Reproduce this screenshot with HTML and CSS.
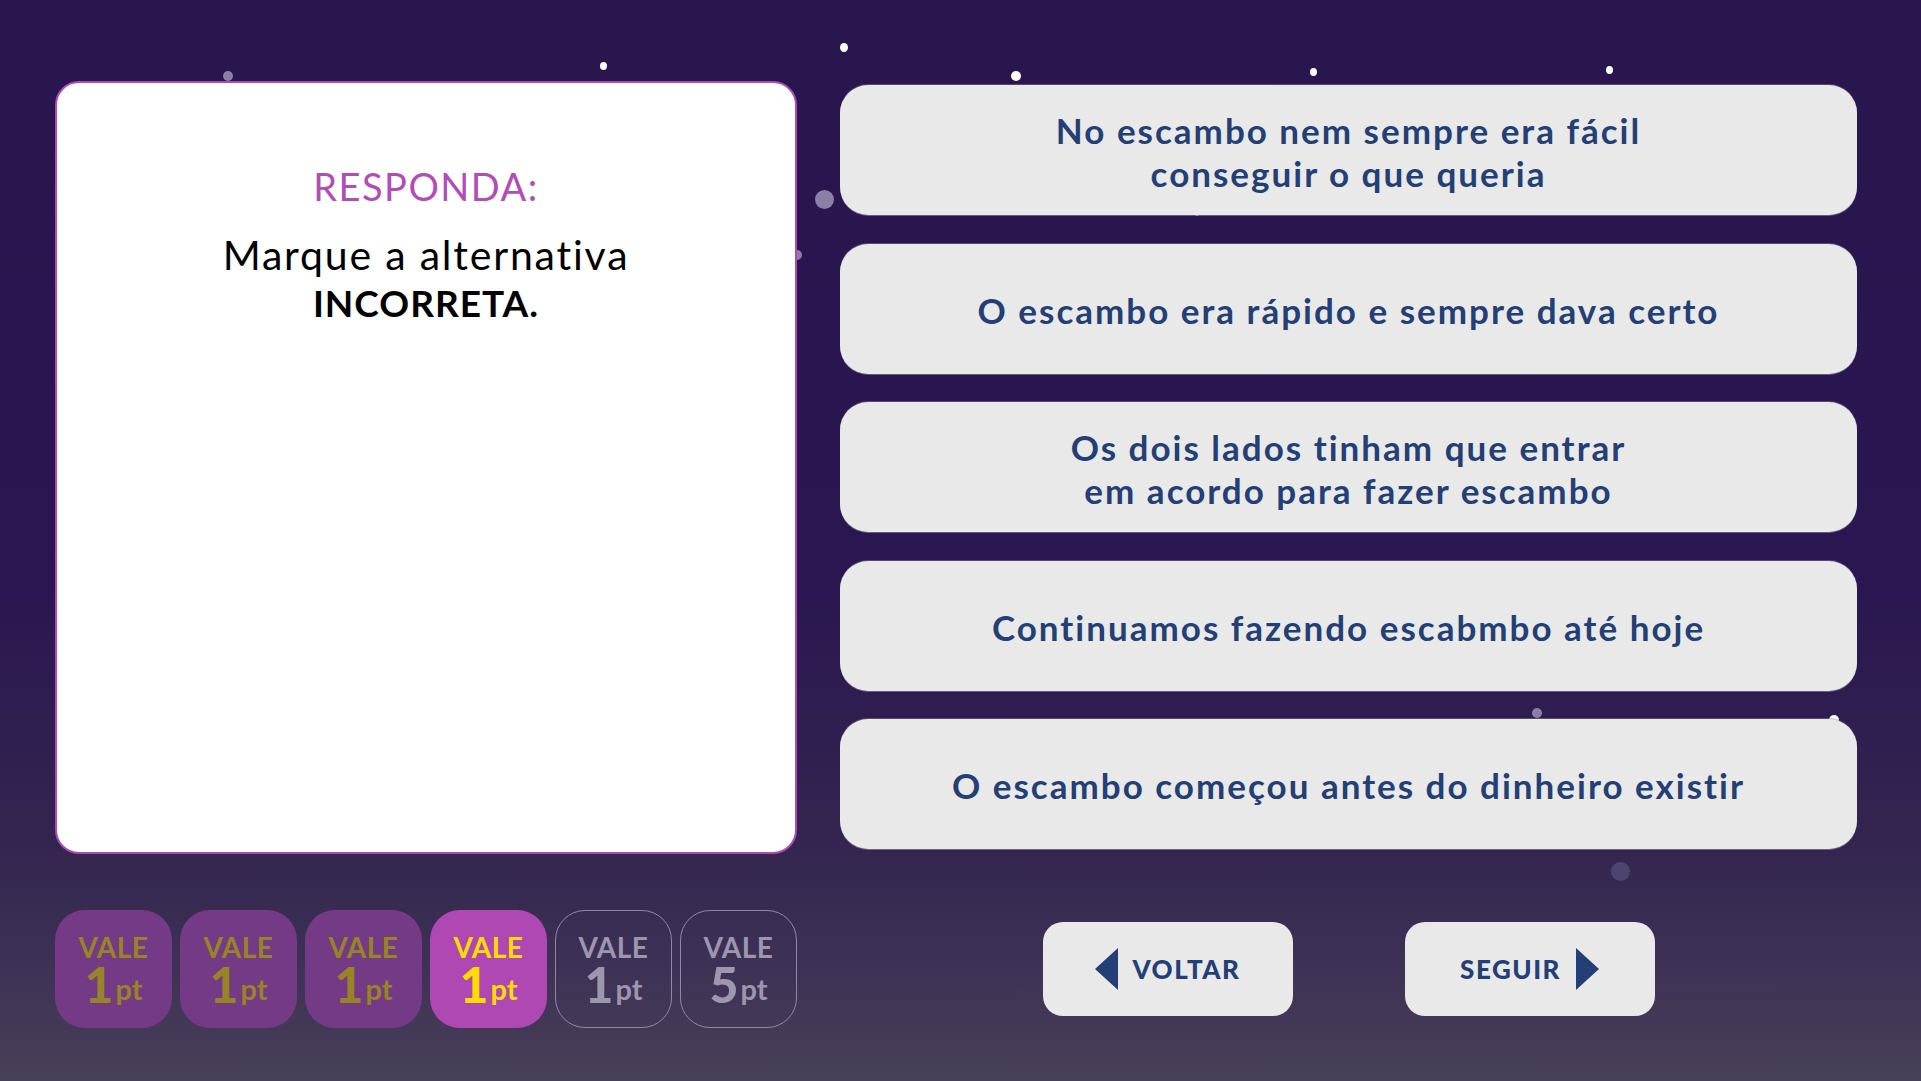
FILE: index.html
```html
<!DOCTYPE html>
<html lang="pt">
<head>
<meta charset="utf-8">
<title>Responda</title>
<link rel="stylesheet" href="styles.css">
</head>
<body>
<div class="screen">
  <div class="sky" aria-hidden="true">
    <span class="star grey" style="left:223px;top:71px;width:10px;height:10px"></span>
    <span class="star" style="left:600px;top:62px;width:7px;height:8px"></span>
    <span class="star" style="left:840px;top:43px;width:8px;height:9px"></span>
    <span class="star" style="left:1011px;top:71px;width:10px;height:10px"></span>
    <span class="star" style="left:1310px;top:68px;width:7px;height:8px"></span>
    <span class="star" style="left:1606px;top:66px;width:7px;height:8px"></span>
    <span class="star grey" style="left:815px;top:190px;width:19px;height:19px"></span>
    <span class="star grey" style="left:792px;top:250px;width:10px;height:10px"></span>
    <span class="star" style="left:1195px;top:212px;width:4px;height:4px"></span>
    <span class="star grey" style="left:1532px;top:708px;width:10px;height:10px"></span>
    <span class="star" style="left:1829px;top:715px;width:10px;height:10px"></span>
    <span class="star faint" style="left:1611px;top:862px;width:19px;height:19px"></span>
  </div>

  <div class="top">
    <section class="question">
      <h1 class="question-title">RESPONDA:</h1>
      <p class="question-text">Marque a alternativa<br><strong>INCORRETA.</strong></p>
    </section>

    <div class="answers">
      <button class="answer">No escambo nem sempre era fácil<br>conseguir o que queria</button>
      <button class="answer">O escambo era rápido e sempre dava certo</button>
      <button class="answer">Os dois lados tinham que entrar<br>em acordo para fazer escambo</button>
      <button class="answer">Continuamos fazendo escabmbo até hoje</button>
      <button class="answer">O escambo começou antes do dinheiro existir</button>
    </div>
  </div>

  <div class="bottom">
    <div class="scores">
      <div class="badge used"><span class="vale">VALE</span><span class="pts"><b>1</b>pt</span></div>
      <div class="badge used"><span class="vale">VALE</span><span class="pts"><b>1</b>pt</span></div>
      <div class="badge used"><span class="vale">VALE</span><span class="pts"><b>1</b>pt</span></div>
      <div class="badge current"><span class="vale">VALE</span><span class="pts"><b>1</b>pt</span></div>
      <div class="badge next"><span class="vale">VALE</span><span class="pts"><b>1</b>pt</span></div>
      <div class="badge next"><span class="vale">VALE</span><span class="pts"><b>5</b>pt</span></div>
    </div>

    <nav class="nav">
      <button class="nav-btn">
        <svg class="arrow" width="23" height="42" viewBox="0 0 23 42"><polygon points="23,0 23,42 0,21" fill="#243f75"/></svg>
        <span>VOLTAR</span>
      </button>
      <button class="nav-btn">
        <span>SEGUIR</span>
        <svg class="arrow" width="23" height="42" viewBox="0 0 23 42"><polygon points="0,0 23,21 0,42" fill="#243f75"/></svg>
      </button>
    </nav>
  </div>
</div>
</body>
</html>
```

FILE: styles.css
```css
* { box-sizing: border-box; }

html, body {
  margin: 0;
  padding: 0;
}

body {
  width: 1921px;
  height: 1081px;
  overflow: hidden;
  font-family: Lato, "Open Sans", sans-serif;
}

.screen {
  position: relative;
  width: 1921px;
  height: 1081px;
  background: linear-gradient(180deg, #29164f 0%, #2a1751 55%, #33254f 78%, #3c3055 88%, #483f58 100%);
  display: flex;
  flex-direction: column;
}

.sky {
  position: absolute;
  inset: 0;
  z-index: 0;
}

.star {
  position: absolute;
  border-radius: 50%;
  background: #ffffff;
}

.star.grey { background: #8b7fa8; }
.star.faint { background: #4e4470; }

.top {
  position: relative;
  z-index: 1;
  display: flex;
  align-items: flex-start;
  gap: 43px;
  padding: 81px 0 0 55px;
}

.question {
  width: 742px;
  height: 773px;
  background: #ffffff;
  border: 2px solid #b04ab4;
  border-radius: 24px;
  text-align: center;
  padding-top: 80px;
}

.question-title {
  margin: 0;
  font-family: Lato, sans-serif;
  font-weight: 400;
  font-size: 38px;
  line-height: 46px;
  letter-spacing: 1.5px;
  color: #b24db8;
}

.question-text {
  margin: 22px 0 0;
  font-size: 41px;
  line-height: 47px;
  letter-spacing: 1.8px;
  color: #000000;
}

.question-text strong {
  font-weight: 700;
  font-size: 37px;
  letter-spacing: 1px;
}

.answers {
  margin-top: 4px;
  width: 1017px;
  display: flex;
  flex-direction: column;
  gap: 28.5px;
}

.answer {
  height: 130px;
  border: none;
  border-radius: 28px;
  background: #e9e9e9;
  box-shadow: 0 1px 0 rgba(130, 120, 150, 0.7), 0 -1px 0 rgba(130, 120, 150, 0.5);
  font-family: Lato, sans-serif;
  font-weight: 700;
  font-size: 35px;
  line-height: 43px;
  letter-spacing: 2px;
  color: #243f75;
  text-align: center;
  padding: 3px 20px 0;
  cursor: pointer;
}

.bottom {
  position: relative;
  z-index: 1;
  display: flex;
  align-items: center;
  gap: 43px;
  padding: 56px 0 0 55px;
}

.scores {
  width: 742px;
  display: flex;
  gap: 8px;
}

.badge {
  width: 117px;
  height: 118px;
  border-radius: 30px;
  display: flex;
  flex-direction: column;
  align-items: center;
  justify-content: center;
  padding-top: 4px;
}

.vale {
  font-weight: 700;
  font-size: 28px;
  line-height: 28px;
  letter-spacing: 0.5px;
}

.pts {
  font-weight: 700;
  font-size: 29px;
  line-height: 40px;
  display: flex;
  align-items: baseline;
}

.pts b {
  font-size: 50px;
  line-height: 40px;
  margin-right: 2px;
  position: relative;
  top: 3px;
}

.badge.used {
  background: #743a85;
  color: #988327;
}

.badge.current {
  background: #b048b4;
  color: #ffdc00;
}

.badge.next {
  border: 1.5px solid #8e88a4;
  color: #9c96ae;
}

.nav {
  width: 1017px;
  display: flex;
  justify-content: center;
  gap: 112px;
}

.nav-btn {
  width: 250px;
  height: 94px;
  border: none;
  border-radius: 20px;
  background: #e9e9e9;
  display: flex;
  align-items: center;
  justify-content: center;
  gap: 15px;
  font-family: Lato, sans-serif;
  font-weight: 900;
  font-size: 26px;
  letter-spacing: 1.5px;
  color: #243f75;
  cursor: pointer;
}

.arrow { display: block; }
```
